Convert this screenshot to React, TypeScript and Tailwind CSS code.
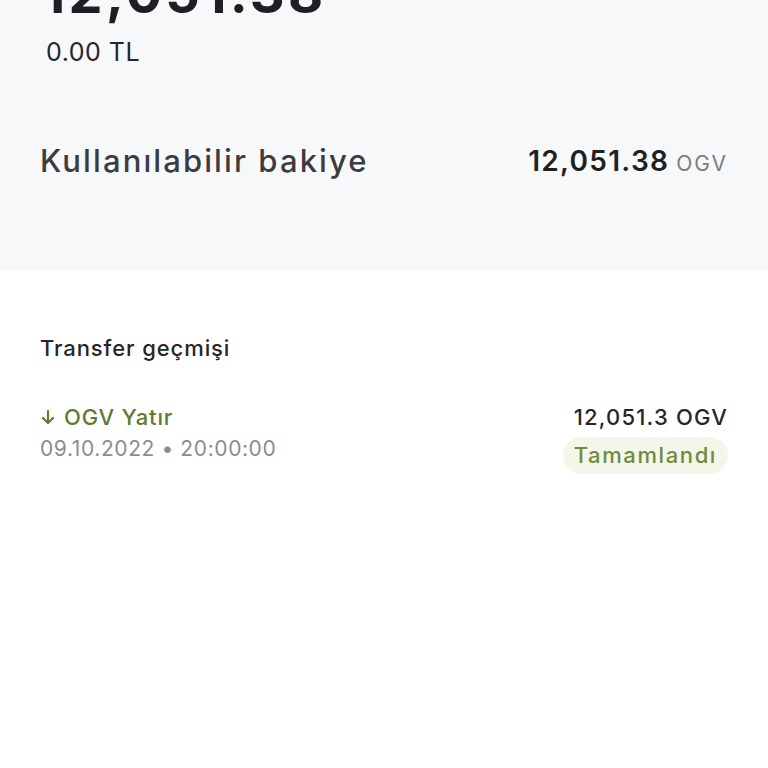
export default function App() {
  return (
    <div className="w-full h-[768px] overflow-hidden bg-white font-['Inter',sans-serif]">
      {/* Balance header */}
      <section className="bg-[#f7f8fa] px-10 pb-[88px] -mt-[34px]">
        <div className="mt-[1px] text-[54px] leading-[54px] font-bold text-[#1f1f23] tracking-[3.3px] pl-[2px]">
          12,051.38
        </div>
        <div className="mt-[16px] pl-[6px] text-[25px] leading-[30px] tracking-[0.5px] text-[#26262a]">0.00 TL</div>

        <div className="mt-[73px] flex items-center justify-between">
          <span className="text-[31px] leading-[36px] font-medium tracking-[2.1px] text-[#3c3c40]">
            Kullanılabilir bakiye
          </span>
          <span className="flex items-baseline gap-[7px]">
            <span className="text-[28px] font-semibold tracking-[1.3px] text-[#1f1f23]">12,051.38</span>
            <span className="text-[21px] tracking-[2px] text-[#7c7c80]">OGV</span>
          </span>
        </div>
      </section>

      {/* History */}
      <section className="px-10 pt-[64px]">
        <h2 className="text-[22px] leading-[28px] font-medium tracking-[0.9px] text-[#26262a]">Transfer geçmişi</h2>

        <div className="mt-[41px] flex justify-between">
          <div>
            <div className="flex items-center gap-[8px] text-[22px] leading-[28px] font-medium tracking-[0.8px] text-[#5e7b34]">
              <svg width="16" height="16" viewBox="0 0 16 16" fill="none" stroke="currentColor" strokeWidth="2.2" strokeLinecap="round" strokeLinejoin="round">
                <path d="M8 2v12M3 9l5 5 5-5" />
              </svg>
              OGV Yatır
            </div>
            <div className="mt-[4px] text-[21px] leading-[28px] tracking-[0.6px] text-[#8c8c90]">09.10.2022 • 20:00:00</div>
          </div>
          <div className="flex flex-col items-end">
            <div className="text-[22px] leading-[28px] font-medium tracking-[1.2px] text-[#26262a]">12,051.3 OGV</div>
            <div className="mt-[6px] rounded-full bg-[#f3f6e9] px-[11px] py-[4px] text-[22px] leading-[29px] font-medium tracking-[1.6px] text-[#6f8b3e]">
              Tamamlandı
            </div>
          </div>
        </div>
      </section>
    </div>
  );
}
